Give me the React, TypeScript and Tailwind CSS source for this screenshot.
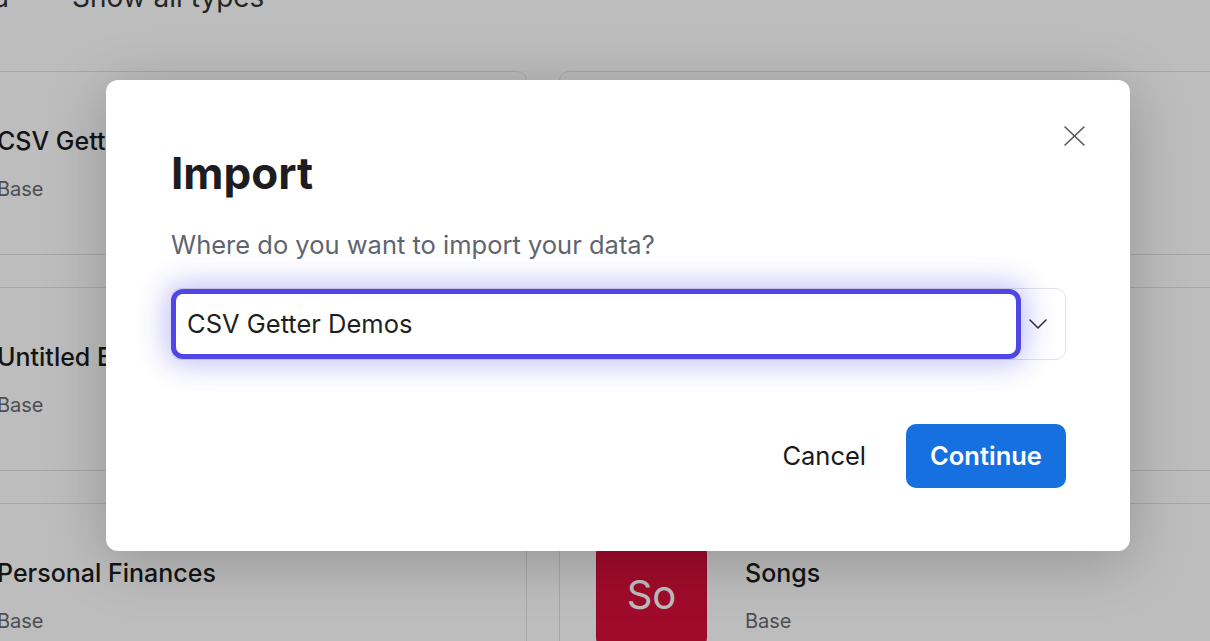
import React from "react";

const bases = [
  { name: "CSV Getter Demos", initials: "CG", color: "bg-[#2d7ff9]" },
  { name: "Sales Pipeline", initials: "SP", color: "bg-[#20c933]" },
  { name: "Untitled Base", initials: "UB", color: "bg-[#8b46ff]" },
  { name: "Product Roadmap", initials: "PR", color: "bg-[#ff6f2c]" },
  { name: "Personal Finances", initials: "PF", color: "bg-[#18bfff]" },
  { name: "Songs", initials: "So", color: "bg-[#d80f3b]" },
];

function BaseCard({ name, initials, color }: { name: string; initials: string; color: string }) {
  return (
    <div className="flex h-[184px] items-center rounded-[10px] border border-[#e2e2e2] bg-white px-[36px]">
      <div
        className={`flex h-[111px] w-[111px] shrink-0 items-center justify-center rounded-[14px] border border-black/10 text-[40px] text-white ${color}`}
      >
        {initials}
      </div>
      <div className="ml-[38px] flex flex-col">
        <div className="text-[25px] leading-[30px] font-medium text-[#1b1b1b]">{name}</div>
        <div className="mt-[21px] text-[20px] leading-[24px] text-[#666b73]">Base</div>
      </div>
    </div>
  );
}

export default function App() {
  return (
    <div className="relative h-[641px] w-[1210px] overflow-hidden bg-white font-['Inter',sans-serif]">
      {/* page behind the dialog */}
      <div className="-ml-[189px]">
        <div className="-mt-[17px] flex h-[28px] items-center text-[28px] leading-[28px] text-[#333]">
          <span className="ml-[137px]">Data</span>
          <span className="ml-[63px]">Show all types</span>
        </div>
        <div className="mt-[60px] grid grid-cols-[716px_716px] gap-x-[32px] gap-y-[32px]">
          {bases.map((b) => (
            <BaseCard key={b.name} {...b} />
          ))}
        </div>
      </div>

      {/* overlay */}
      <div className="absolute inset-0 bg-black/[0.26]" />

      {/* dialog */}
      <div className="absolute left-[106px] top-[80px] w-[1024px] rounded-[12px] bg-white px-[64px] pb-[63px] pl-[65px] pt-[67px] shadow-[0_10px_60px_rgba(0,0,0,0.22)]">
        <button className="absolute right-[45px] top-[46px] flex h-[20px] w-[21px] items-center justify-center text-[#555]">
          <svg width="21" height="20" viewBox="0 0 21 20" fill="none" stroke="currentColor" strokeWidth="1.6" strokeLinecap="round">
            <line x1="1" y1="1" x2="20" y2="19" />
            <line x1="20" y1="1" x2="1" y2="19" />
          </svg>
        </button>

        <h2 className="text-[44px] leading-[52px] font-bold text-[#1d1d1f]">Import</h2>
        <p className="mt-[31px] text-[25.5px] leading-[30px] text-[#5f6570]">Where do you want to import your data?</p>

        <div className="mt-[28px] flex h-[72px] items-stretch rounded-[10px] border border-[#e2e2e2] bg-white">
          <div className="-ml-px flex w-[850px] items-center rounded-[12px] border-[5px] border-[#4f46e5] bg-white pl-[11px] text-[25.5px] text-[#1f1f23] shadow-[0_0_28px_6px_rgba(79,70,229,0.32)]">
            CSV Getter Demos
          </div>
          <div className="flex flex-1 items-center pl-[8px] text-[#333]">
            <svg width="18" height="10" viewBox="0 0 18 10" fill="none" stroke="currentColor" strokeWidth="1.6" strokeLinecap="round" strokeLinejoin="round">
              <polyline points="1,1 9,9 17,1" />
            </svg>
          </div>
        </div>

        <div className="mt-[64px] flex items-center justify-end">
          <button className="mr-[40px] text-[25.5px] leading-[30px] text-[#1a1a1a]">Cancel</button>
          <button className="flex h-[64px] w-[160px] items-center justify-center rounded-[10px] bg-[#1770e0] text-[25.5px] font-semibold text-white">
            Continue
          </button>
        </div>
      </div>
    </div>
  );
}
